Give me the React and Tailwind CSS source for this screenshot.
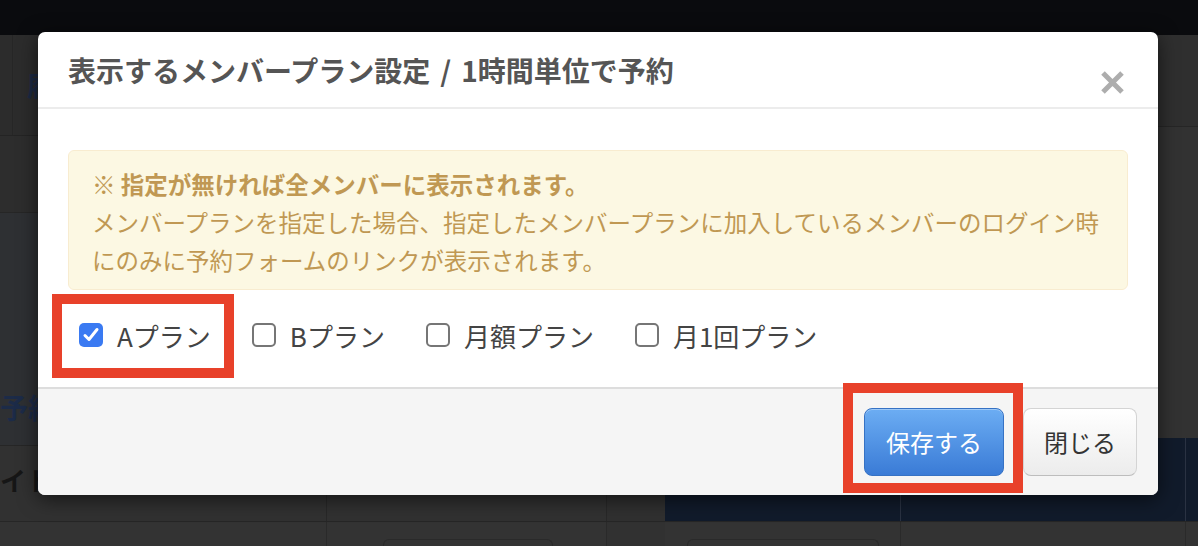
import React from "react";

const jp = { fontFamily: '"Noto Sans CJK JP", "Noto Sans", sans-serif' };

const plans = [
  { label: "Aプラン", checked: true },
  { label: "Bプラン", checked: false },
  { label: "月額プラン", checked: false },
  { label: "月1回プラン", checked: false },
];

// 背景のページ（オーバーレイで暗くなっている部分）
const BackgroundPage = () => (
  <div className="flex h-full flex-col">
    <div className="h-[35px] shrink-0 bg-[#0a0b0e]" />
    <div className="flex min-h-0 flex-1">
      {/* 左側 */}
      <div className="flex w-[665px] flex-col">
        <div className="flex h-[101px] shrink-0 border-b border-[#242424] bg-[#2c2c2c]">
          <div className="w-[13px] border-r border-[#262626]" />
          <div className="pl-[14px] pt-[30px] text-[26px] font-bold text-[#1c2a44]">履</div>
        </div>
        <div className="h-[77px] shrink-0 border-b border-[#262626] bg-[#2d2d2d]" />
        <div className="flex h-[233px] shrink-0 items-end border-b border-[#262626] bg-[#2e3033] pb-[20px]">
          <div className="whitespace-nowrap text-[28px] font-bold leading-[36px] text-[#1c2b48]">予約</div>
        </div>
        <div className="flex h-[76px] shrink-0 border-b border-[#262626] bg-[#313131]">
          <div className="w-[327px] border-r border-[#282828] pt-[14px]">
            <div className="whitespace-nowrap text-[26px] font-bold text-[#161616]">イト</div>
          </div>
          <div className="w-[280px] border-r border-[#282828]" />
          <div className="flex-1 bg-[#303030]" />
        </div>
        <div className="flex min-h-0 flex-1 overflow-hidden bg-[#333333]">
          <div className="w-[327px] border-r border-[#2a2a2a]" />
          <div className="w-[280px] border-r border-[#2a2a2a] pl-[56px] pt-[17px]">
            <div className="h-[20px] w-[170px] rounded-t-[6px] border border-b-0 border-[#2a2a2a]" />
          </div>
          <div className="flex-1 bg-[#313131]" />
        </div>
      </div>
      {/* 右側 */}
      <div className="flex flex-1 flex-col">
        <div className="h-[92px] shrink-0 border-b border-[#262626] bg-[#2f2f2f]" />
        <div className="h-[311px] shrink-0 bg-[#323232]" />
        <div className="flex h-[84px] shrink-0 border-b border-[#262626] bg-[#111b2b]">
          <div className="w-[236px] border-r border-[#2a3242]" />
          <div className="w-[285px] border-r border-[#2a3242]" />
          <div className="flex-1" />
        </div>
        <div className="flex min-h-0 flex-1 overflow-hidden bg-[#333333]">
          <div className="w-[236px] border-r border-[#2a2a2a] pl-[22px] pt-[17px]">
            <div className="h-[20px] w-[192px] rounded-t-[6px] border border-b-0 border-[#2a2a2a]" />
          </div>
          <div className="w-[285px] border-r border-[#2a2a2a]" />
          <div className="flex-1" />
        </div>
      </div>
    </div>
  </div>
);

const Checkbox = ({ checked }) =>
  checked ? (
    <span className="flex h-[24px] w-[24px] shrink-0 items-center justify-center rounded-[5px] bg-[#3a7af2]">
      <svg width="18" height="18" viewBox="0 0 18 18">
        <path d="M3 9.5 L7 13.5 L15 3.5" fill="none" stroke="#ffffff" strokeWidth="3" strokeLinecap="round" strokeLinejoin="round" />
      </svg>
    </span>
  ) : (
    <span className="h-[24px] w-[24px] shrink-0 rounded-[5px] border-2 border-[#767676] bg-white" />
  );

export default function App() {
  return (
    <div className="relative h-[546px] w-[1198px] overflow-hidden bg-[#333333]" style={jp}>
      <BackgroundPage />

      {/* モーダル */}
      <div className="absolute left-[38px] top-[32px] flex h-[463px] w-[1120px] flex-col overflow-hidden rounded-[7px] bg-white shadow-[0_4px_20px_rgba(0,0,0,0.6)]">
        <div className="flex h-[77px] shrink-0 items-start justify-between border-b-2 border-[#ececec] px-[30px]">
          <h3 className="whitespace-nowrap pt-[19px] text-[28px] font-bold leading-[38px] text-[#555555]">
            表示するメンバープラン設定<span className="mx-[10px]">/</span>1時間単位で予約
          </h3>
          <svg className="mr-[3px] mt-[38px] shrink-0" width="25" height="25" viewBox="0 0 25 25">
            <path d="M3 3 L22 22 M22 3 L3 22" stroke="#adadad" strokeWidth="5" />
          </svg>
        </div>

        <div className="flex h-[278px] shrink-0 flex-col px-[30px] pt-[41px]">
          <div className="rounded-[6px] border border-[#f8ecd0] bg-[#fcf8e3] pb-[10px] pl-[23px] pt-[14px] text-[23.5px] leading-[38px] text-[#c09853]">
            <div className="whitespace-nowrap font-bold">※ 指定が無ければ全メンバーに表示されます。</div>
            <div className="whitespace-nowrap">
              メンバープランを指定した場合、指定したメンバープランに加入しているメンバーのログイン時
            </div>
            <div className="whitespace-nowrap">にのみに予約フォームのリンクが表示されます。</div>
          </div>
          <div className="mt-[27px] flex h-[36px] items-center gap-[41px] pl-[11px]">
            {plans.map((p) => (
              <label key={p.label} className="flex items-center gap-[14px] whitespace-nowrap text-[26px] text-[#444444]">
                <Checkbox checked={p.checked} />
                <span>{p.label}</span>
              </label>
            ))}
          </div>
        </div>

        <div className="flex flex-1 items-start justify-end gap-[19px] border-t-2 border-[#dddddd] bg-[#f5f5f5] pr-[21px] pt-[19px]">
          <button className="h-[68px] w-[140px] rounded-[8px] border border-[#3672c4] bg-gradient-to-b from-[#6cadf3] to-[#3a7bd6] text-[24px] text-white shadow-[inset_0_1px_0_rgba(255,255,255,0.35)]">
            保存する
          </button>
          <button className="h-[68px] w-[114px] rounded-[8px] border border-[#d4d4d4] border-b-[#bdbdbd] bg-gradient-to-b from-white to-[#ececec] text-[24px] text-[#333333]">
            閉じる
          </button>
        </div>

        {/* 注釈の赤枠 */}
        <div className="absolute left-[14px] top-[262px] h-[84px] w-[182px] border-[10px] border-[#e8412a]" />
        <div className="absolute left-[805px] top-[351px] h-[110px] w-[180px] border-[10px] border-[#e8412a]" />
      </div>
    </div>
  );
}
